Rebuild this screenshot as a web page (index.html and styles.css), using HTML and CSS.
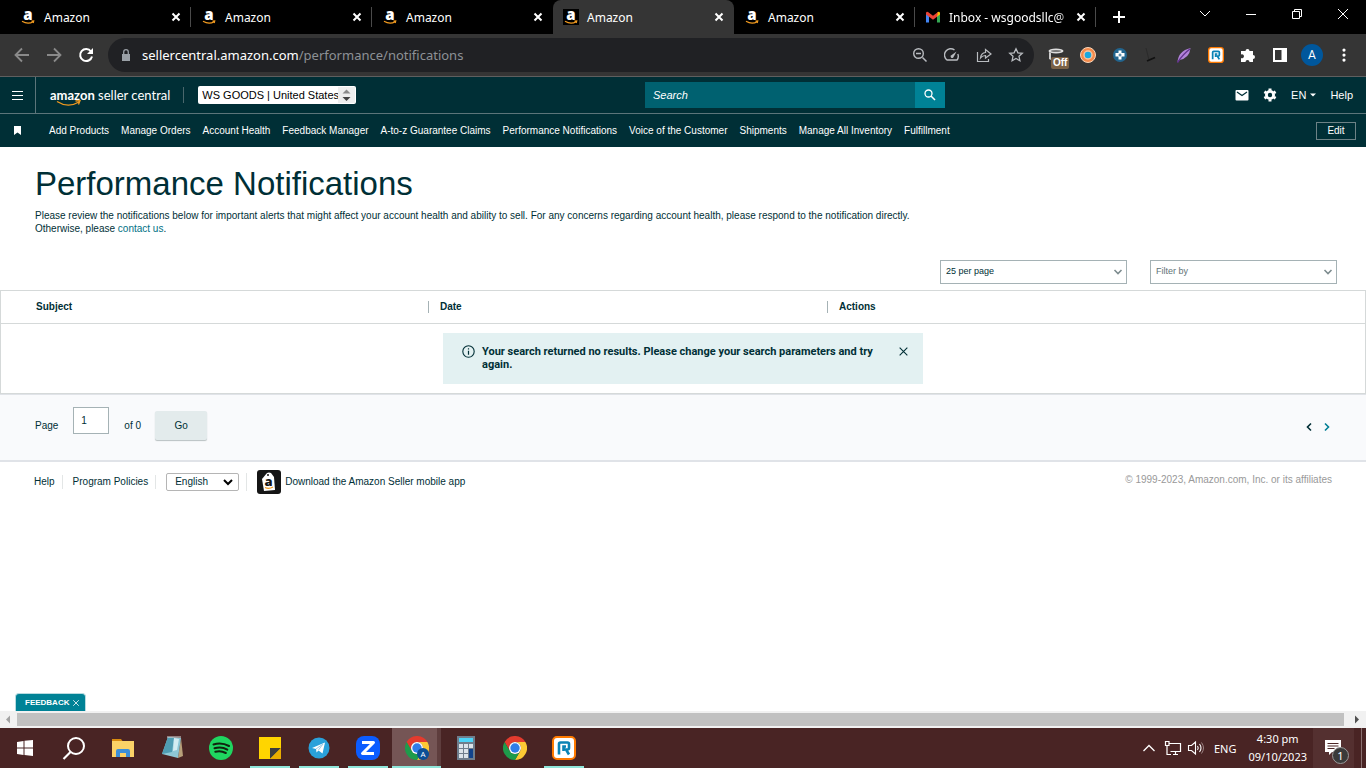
FILE: index.html
```
<!DOCTYPE html>
<html lang="en">
<head>
    <meta charset="UTF-8">
    <meta name="viewport" content="width=device-width, initial-scale=1.0">
    <title>Performance Notifications</title>
    <link rel="stylesheet" href="styles.css">
</head>
<body>
    <!-- shared icons -->
    <svg class="sprite" aria-hidden="true">
        <symbol id="amazon" viewBox="0 0 16 16">
            <rect width="16" height="16" fill="#000"/>
            <text x="8" y="11" text-anchor="middle" font-family="Open Sans, sans-serif" font-weight="800" font-size="15" fill="#fff">a</text>
            <path d="M2 12.3q6 3.6 11.2.4M11.5 12.2l2.2-.2-.5 2" fill="none" stroke="#f19a1f" stroke-width="1.2"/>
        </symbol>
        <symbol id="close" viewBox="0 0 10 10">
            <path d="M1.5 1.5l7 7M8.5 1.5l-7 7" fill="none" stroke="currentColor"/>
        </symbol>
        <symbol id="chevron" viewBox="0 0 10 10">
            <path d="M1.5 3l3.5 3.5L8.500 3" fill="none" stroke="currentColor" stroke-width="1.6"/>
        </symbol>
        <symbol id="chrome" viewBox="0 0 24 24">
            <path d="M1.6 6A12 12 0 0 1 22.4 6H12A6 6 0 0 0 6.8 15Z" fill="#e33b2e"/>
            <path d="M1.6 6A12 12 0 0 1 22.4 6H12A6 6 0 0 0 6.8 15Z" fill="#fcc934" transform="rotate(120 12 12)"/>
            <path d="M1.6 6A12 12 0 0 1 22.4 6H12A6 6 0 0 0 6.8 15Z" fill="#1e9b4b" transform="rotate(240 12 12)"/>
            <circle cx="12" cy="12" r="6" fill="#fff"/>
            <circle cx="12" cy="12" r="4.7" fill="#2f7de9"/>
        </symbol>
        <symbol id="ring" viewBox="0 0 24 24">
            <rect x="1" y="1" width="22" height="22" rx="4" fill="#fff" stroke="#ff7a00" stroke-width="2"/>
            <path d="M7 18.500V8q0-1.500 1.500-1.500h7Q17 6.500 17 8v4q0 1.500-1.500 1.500H14l3 5M11.500 15v-4.500h2.500" fill="none" stroke="#0a83b5" stroke-width="2.600"/>
        </symbol>
    </svg>

    <div class="tabs">
        <div class="tab">
            <svg class="favicon"><use href="#amazon"/></svg><span>Amazon</span>
            <button class="tab-close" aria-label="Close tab"><svg><use href="#close"/></svg></button>
        </div>
        <div class="tab">
            <svg class="favicon"><use href="#amazon"/></svg><span>Amazon</span>
            <button class="tab-close" aria-label="Close tab"><svg><use href="#close"/></svg></button>
        </div>
        <div class="tab no-line">
            <svg class="favicon"><use href="#amazon"/></svg><span>Amazon</span>
            <button class="tab-close" aria-label="Close tab"><svg><use href="#close"/></svg></button>
        </div>
        <div class="tab active">
            <svg class="favicon"><use href="#amazon"/></svg><span>Amazon</span>
            <button class="tab-close" aria-label="Close tab"><svg><use href="#close"/></svg></button>
        </div>
        <div class="tab">
            <svg class="favicon"><use href="#amazon"/></svg><span>Amazon</span>
            <button class="tab-close" aria-label="Close tab"><svg><use href="#close"/></svg></button>
        </div>
        <div class="tab">
            <svg class="favicon" viewBox="0 0 16 16">
                <path d="M1 4v9.5h3V7z" fill="#4285f4"/>
                <path d="M12 7v6.5h3V4z" fill="#34a853"/>
                <path d="M12 3.8v4L15 5.500V4q-.5-2-2-1z" fill="#fbbc04"/>
                <path d="M1 5.500V4q.5-2 2-1l5 3.700L13 3l-1 4.800-4 3-4-3z" fill="#ea4335"/>
            </svg><span class="fade">Inbox - wsgoodsllc@</span>
            <button class="tab-close" aria-label="Close tab"><svg><use href="#close"/></svg></button>
        </div>
        <button class="new-tab" aria-label="New tab"><svg viewBox="0 0 14 14"><path d="M7 1v12M1 7h12" stroke="#fff" stroke-width="2"/></svg></button>
        <div class="window-buttons">
            <button aria-label="Search tabs"><svg viewBox="0 0 12 12"><path d="M1 3l5 5 5-5" fill="none" stroke="#fff"/></svg></button>
            <button aria-label="Minimize"><svg viewBox="0 0 12 12"><path d="M1 6.500h10" stroke="#fff"/></svg></button>
            <button aria-label="Restore"><svg viewBox="0 0 12 12"><path d="M1.500 3.500h7v7h-7zM3.500 3.500v-2h7v7h-2" fill="none" stroke="#fff"/></svg></button>
            <button aria-label="Close"><svg viewBox="0 0 12 12"><path d="M1 1l10 10M11 1L1 11" stroke="#fff"/></svg></button>
        </div>
    </div>

    <div class="toolbar">
        <button class="tool dim" aria-label="Back"><svg viewBox="0 0 16 16"><path d="M15 8H2M8 1.500L1.500 8 8 14.500" fill="none" stroke="currentColor" stroke-width="1.800"/></svg></button>
        <button class="tool dim" aria-label="Forward"><svg viewBox="0 0 16 16"><path d="M1 8h13M8 1.500L14.500 8 8 14.500" fill="none" stroke="currentColor" stroke-width="1.800"/></svg></button>
        <button class="tool" aria-label="Reload"><svg viewBox="0 0 16 16"><path d="M13 4.500A6 6 0 1 0 14 9.500" fill="none" stroke="#fff" stroke-width="2"/><path d="M15 1v6H9z" fill="#fff"/></svg></button>
        <div class="omnibox">
            <svg class="lock" viewBox="0 0 10 12"><path d="M1 5h8v7H1z" fill="#9aa0a6"/><path d="M2.700 5V3a2.300 2.300 0 0 1 4.600 0v2" fill="none" stroke="#9aa0a6" stroke-width="1.300"/></svg>
            <span class="url">sellercentral.amazon.com<span class="path">/performance/notifications</span></span>
            <button class="tool" aria-label="Zoom"><svg viewBox="0 0 16 16"><path d="M10.500 10.500l4 4M4 6.500h5" fill="none" stroke="currentColor" stroke-width="1.500"/><circle cx="6.500" cy="6.500" r="4.800" fill="none" stroke="currentColor" stroke-width="1.400"/></svg></button>
            <button class="tool" aria-label="Performance"><svg viewBox="0 0 16 16"><path d="M10.500 3A6 6 0 0 0 3 13h10a6 6 0 0 0 .8-6" fill="none" stroke="currentColor" stroke-width="1.400"/><path d="M12.500 4.500L9.300 10.500a1.500 1.500 0 0 1-2.300-2z" fill="currentColor"/></svg></button>
            <button class="tool" aria-label="Share"><svg viewBox="0 0 16 16"><path d="M1.500 5v9.500h11V12M4.500 11q.5-5 5-5.500v-3L15 7l-5.500 4V8.500q-3 0-5 2.500z" fill="none" stroke="currentColor" stroke-width="1.200"/></svg></button>
            <button class="tool" aria-label="Bookmark"><svg viewBox="0 0 16 16"><path d="M8 1.800l1.900 4 4.400.5-3.300 3 .9 4.400L8 11.500l-3.900 2.200.9-4.400-3.300-3 4.400-.5z" fill="none" stroke="currentColor" stroke-width="1.300"/></svg></button>
        </div>
        <button class="tool ext-off" aria-label="Extension off"><svg viewBox="0 0 16 16"><ellipse cx="8" cy="4" rx="7.500" ry="2.500" fill="#ddd"/><ellipse cx="8" cy="4" rx="5" ry="1" fill="#777"/><path d="M1 5v7l2 1V6" fill="#ccc"/></svg><span>Off</span></button>
        <button class="tool" aria-label="Extension"><svg viewBox="0 0 16 16"><circle cx="8" cy="8" r="7.500" fill="#f58a4b" stroke="#f9d7bb"/><circle cx="8" cy="8" r="4" fill="#19a8e0" stroke="#f7c6a0" stroke-width="1.400"/></svg></button>
        <button class="tool" aria-label="Extension"><svg viewBox="0 0 16 16"><circle cx="8" cy="8" r="7" fill="#22658f"/><path d="M6.500 3.500h3v2.500h3v3.500h-3v3h-3v-3h-3V6h3z" fill="#fff"/><path d="M8 6.500v3M6.500 8h3" stroke="#22658f"/></svg></button>
        <button class="tool" aria-label="Extension"><svg viewBox="0 0 16 16"><path d="M2 1l3 12" stroke="#2a2a2a"/><path d="M3 14l8-3.500" stroke="#111" stroke-width="1.800"/></svg></button>
        <button class="tool" aria-label="Extension"><svg viewBox="0 0 16 16"><path d="M1.500 15.500Q2 4 14.500 1q-1 10-11 12z" fill="#b183d8"/><path d="M1.500 15.500Q7 7 14 2" fill="none" stroke="#63318e" stroke-width="1.400"/></svg></button>
        <button class="tool" aria-label="Extension"><svg><use href="#ring"/></svg></button>
        <button class="tool" aria-label="Extensions"><svg viewBox="0 0 16 16"><path d="M1 4h4.500a2 2 0 1 1 4 0H13v4a2 2 0 1 1 0 4v3H9.500a2 2 0 1 0-4 0H1v-4a2 2 0 1 0 0-3.500z" fill="#fff"/></svg></button>
        <button class="tool" aria-label="Side panel"><svg viewBox="0 0 16 16"><path d="M1 1h14v14H1zM3 3v10h6.500V3z" fill="#fff" fill-rule="evenodd"/></svg></button>
        <button class="tool" aria-label="Profile"><span class="avatar">A</span></button>
        <button class="tool" aria-label="Menu"><svg viewBox="0 0 16 16"><path d="M8 3v.1M8 8v.1M8 13v.1" stroke="#fff" stroke-width="3.200" stroke-linecap="round"/></svg></button>
    </div>

    <header class="site-header">
        <div class="header-left">
            <button class="menu" aria-label="Menu"><svg viewBox="0 0 11 9"><path d="M0 .5h11M0 4.500h11M0 8.500h11" stroke="#fff" stroke-width="1"/></svg></button>
            <a class="logo" href="#"><b>amazon</b> seller central
                <svg class="smile" viewBox="0 0 26 7"><path d="M1 1.500q11 7 22 .5M19.500 1l4.500-.3-1.500 3.800" fill="none" stroke="#f19a1f" stroke-width="1.300"/></svg>
            </a>
            <div class="account">
                <select aria-label="Account"><option>WS GOODS | United States</option></select>
                <svg viewBox="0 0 17 16"><path d="M4.500 6.500l4-4 4 4z" fill="#8a8a8a"/><path d="M4.500 10l4 4 4-4z" fill="#444"/></svg>
            </div>
        </div>
        <form class="search">
            <input type="text" placeholder="Search" aria-label="Search">
            <button type="button" aria-label="Search"><svg viewBox="0 0 12 12"><circle cx="4.500" cy="4.500" r="3.500" fill="none" stroke="#fff" stroke-width="1.300"/><path d="M7 7l4 4" stroke="#fff" stroke-width="1.600"/></svg></button>
        </form>
        <div class="header-right">
            <a href="#" aria-label="Messages"><svg viewBox="0 0 14 14"><rect x=".5" y="2" width="13" height="10.500" rx="1" fill="#fff"/><path d="M2 4l5 3.500L12 4" fill="none" stroke="#002f36" stroke-width="1.200"/></svg></a>
            <a href="#" aria-label="Settings"><svg viewBox="0 0 14 14"><circle cx="7" cy="7" r="3.600" fill="none" stroke="#fff" stroke-width="2.800"/><path d="M7 .5v2M7 11.500v2M1.400 3.700l1.700 1M10.900 9.300l1.700 1M1.400 10.300l1.700-1M10.900 4.700l1.700-1" stroke="#fff" stroke-width="3"/></svg></a>
            <a class="lang" href="#">EN <svg viewBox="0 0 6 4"><path d="M0 .5h6L3 3.500z" fill="#fff"/></svg></a>
            <a href="#">Help</a>
        </div>
    </header>

    <nav class="favorites">
        <svg class="bookmark" viewBox="0 0 7 9"><path d="M0 0h7v9L3.500 6.500 0 9z" fill="#fff"/></svg>
        <a href="#">Add Products</a>
        <a href="#">Manage Orders</a>
        <a href="#">Account Health</a>
        <a href="#">Feedback Manager</a>
        <a href="#">A-to-z Guarantee Claims</a>
        <a href="#">Performance Notifications</a>
        <a href="#">Voice of the Customer</a>
        <a href="#">Shipments</a>
        <a href="#">Manage All Inventory</a>
        <a href="#">Fulfillment</a>
        <button class="edit">Edit</button>
    </nav>

    <main>
        <div class="intro">
            <h1>Performance Notifications</h1>
            <p>Please review the notifications below for important alerts that might affect your account health and ability to sell. For any concerns regarding account health, please respond to the notification directly. Otherwise, please <a href="#">contact us</a>.</p>
        </div>

        <div class="filters">
            <div class="dropdown">
                <select aria-label="Results per page"><option>25 per page</option></select>
                <svg><use href="#chevron"/></svg>
            </div>
            <div class="dropdown muted">
                <select aria-label="Filter by"><option>Filter by</option></select>
                <svg><use href="#chevron"/></svg>
            </div>
        </div>

        <table class="notifications">
            <thead>
                <tr>
                    <th class="col-subject"><span>Subject</span></th>
                    <th class="col-date"><span>Date</span></th>
                    <th><span>Actions</span></th>
                </tr>
            </thead>
            <tbody>
                <tr>
                    <td colspan="3">
                        <div class="alert">
                            <svg class="info" viewBox="0 0 13 13"><circle cx="6.500" cy="6.500" r="5.700" fill="none" stroke="#002f36" stroke-width="1.100"/><path d="M6.500 5.700v4M6.500 3.200v1.300" stroke="#002f36" stroke-width="1.200"/></svg>
                            <p>Your search returned no results. Please change your search parameters and try again.</p>
                            <button aria-label="Dismiss"><svg><use href="#close"/></svg></button>
                        </div>
                    </td>
                </tr>
            </tbody>
        </table>

        <form class="pagination">
            <label for="page">Page</label>
            <input id="page" type="text" value="1">
            <span>of 0</span>
            <button type="button" class="go">Go</button>
            <div class="arrows">
                <button type="button" class="prev" aria-label="Previous page"><svg><use href="#chevron"/></svg></button>
                <button type="button" class="next" aria-label="Next page"><svg><use href="#chevron"/></svg></button>
            </div>
        </form>

        <footer>
            <a href="#">Help</a>
            <a href="#">Program Policies</a>
            <div class="language">
                <select aria-label="Language"><option>English</option></select>
                <svg viewBox="0 0 10 10"><path d="M1 3l4 4 4-4" fill="none" stroke="#000" stroke-width="2"/></svg>
            </div>
            <a class="app" href="#">
                <svg viewBox="0 0 24 24"><rect width="24" height="24" rx="3" fill="#151515"/><path d="M5 9l5-6q2-1 4 0l3 4 1 13-11 1z" fill="#fff"/><circle cx="11" cy="5" r="1" fill="#151515"/><text x="11.500" y="16" text-anchor="middle" font-family="Open Sans, sans-serif" font-weight="800" font-size="13" fill="#151515">a</text><path d="M8 17.500q4 2 8-.5" fill="none" stroke="#f19a1f" stroke-width="1.200"/></svg>
                Download the Amazon Seller mobile app
            </a>
            <small>© 1999-2023, Amazon.com, Inc. or its affiliates</small>
        </footer>

        <button class="feedback">FEEDBACK <svg><use href="#close"/></svg></button>
    </main>

    <div class="scrollbar">
        <svg viewBox="0 0 17 17"><path d="M10 4.500v8L6 8.500z" fill="#a3a3a3"/></svg>
        <div class="thumb"></div>
        <svg viewBox="0 0 17 17"><path d="M6 4.500v8l4-4z" fill="#505050"/></svg>
    </div>

    <div class="taskbar">
        <button class="task" aria-label="Start"><svg viewBox="0 0 24 24"><path d="M4 6l6.500-1v6.500H4zM11.500 4.800L20 4v7.500h-8.500zM4 12.500h6.500V19L4 18zM11.500 12.500H20V20l-8.500-1z" fill="#fff"/></svg></button>
        <button class="task" aria-label="Search"><svg viewBox="0 0 24 24"><circle cx="14" cy="10" r="8" fill="none" stroke="#fff" stroke-width="2"/><path d="M8.500 16L1.500 23" stroke="#fff" stroke-width="2.200"/></svg></button>
        <button class="task" aria-label="File Explorer"><svg viewBox="0 0 24 24"><path d="M1 3h9l1.500 2H1z" fill="#d98c0f"/><path d="M1 5h22v16H1z" fill="#fbd267"/><path d="M5 21v-6q0-2 2-2h10q2 0 2 2v6h-4v-4H9v4z" fill="#3b8fd9"/></svg></button>
        <button class="task" aria-label="Notepad"><svg viewBox="0 0 24 24"><path d="M21 2l2 18-5 2z" fill="#b8a07a"/><path d="M8 1l13 1-3 20-16-4z" fill="#8ec8d6"/><path d="M8 1l6 1-2 14-10 2z" fill="#4f9db3"/><path d="M14 2l5 1-2 11-4 1z" fill="#d3edf2"/><path d="M7 1h14" stroke="#ddd"/></svg></button>
        <button class="task" aria-label="Spotify"><svg viewBox="0 0 24 24"><circle cx="12" cy="12" r="12" fill="#1fd660"/><path d="M4.500 8.500q8-2.500 15.500 1.500M5.500 12.300q7-2 12.800 1.300M6.300 15.800q5.500-1.500 10.500 1.200" fill="none" stroke="#10240f" stroke-width="2" stroke-linecap="round"/></svg></button>
        <button class="task open" aria-label="Sticky Notes"><svg viewBox="0 0 24 24"><path d="M1 1h22v22H1z" fill="#ffd500"/><path d="M12 12h11L12 23z" fill="#3d3d3d"/><path d="M23 12v11H12z" fill="#e9ad00"/></svg></button>
        <button class="task open" aria-label="Telegram"><svg viewBox="0 0 24 24"><circle cx="12" cy="12" r="10.500" fill="#2aa1da"/><path d="M5 12l13-5.500-2.500 11-4-3-2 2-.5-3.500z" fill="#fff"/><path d="M9 13l7-5-4.500 6" fill="none" stroke="#9ccbe4"/></svg></button>
        <button class="task open" aria-label="Zoom"><svg viewBox="0 0 24 24"><rect width="24" height="24" rx="8" fill="#0b5cff"/><path d="M6 6.500h11.500L6.500 17.500H18" fill="none" stroke="#fff" stroke-width="3" stroke-linejoin="round"/></svg></button>
        <button class="task open current" aria-label="Chrome"><svg viewBox="0 0 24 24"><use href="#chrome"/><circle cx="18" cy="18" r="6" fill="#0c4f96"/><text x="18" y="21" text-anchor="middle" font-family="Open Sans, sans-serif" font-size="8" fill="#fff">A</text></svg></button>
        <button class="task" aria-label="Calculator"><svg viewBox="0 0 24 24"><path d="M3 0h18v24H3z" fill="#6f7d8c"/><path d="M5 2h14v4H5z" fill="#4cd3f7"/><path d="M5 8h4v4H5zM10 8h4v4h-4zM15 8h4v4h-4zM5 13h4v4H5zM10 13h4v4h-4zM5 18h4v4H5zM10 18h4v4h-4z" fill="#dbe3ea"/><path d="M15 13h4v9h-4z" fill="#12438c"/></svg></button>
        <button class="task" aria-label="Chrome"><svg><use href="#chrome"/></svg></button>
        <button class="task open" aria-label="RingCentral"><svg><use href="#ring"/></svg></button>
        <div class="tray">
            <svg class="tray-up" viewBox="0 0 14 14"><path d="M1.500 10L7 4.500l5.500 5.500" fill="none" stroke="#fff" stroke-width="1.300"/></svg>
            <svg viewBox="0 0 18 16"><path d="M5.500 3.500h11v8h-10M9 14.500h5M11.500 12v2M3 5v9.500h4M1.500 1.500h3.500v4H1.500z" fill="none" stroke="#fff" stroke-width="1.200"/></svg>
            <svg viewBox="0 0 18 16"><path d="M1.500 5.500h3l4-3.500v12l-4-3.500h-3zM10.500 6q1.500 2 0 4M12.500 4q3 4 0 8" fill="none" stroke="#fff" stroke-width="1.100"/><path d="M14.500 2.500q4 5.500 0 11" fill="none" stroke="#9d8585"/></svg>
            <span class="ime">ENG</span>
            <div class="clock">4:30 pm<br>09/10/2023</div>
            <button class="action-center" aria-label="Notifications"><svg viewBox="0 0 24 24"><path d="M1 4h16v12H8l-3 3v-3H1z" fill="#fff"/><path d="M3.500 7.500h11M3.500 10h11M3.500 12.500h7" stroke="#4d2929" stroke-width="1"/></svg><span class="count">1</span></button>
        </div>
    </div>
</body>
</html>
```
FILE: styles.css
```
* {
    box-sizing: border-box;
}
body {
    margin: 0;
    min-height: 100vh;
    display: flex;
    flex-direction: column;
    font-family: "Liberation Sans", Arial, sans-serif;
    font-size: 10px;
    color: #002f36;
    background-color: #fff;
}
button {
    padding: 0;
    border: none;
    background: none;
    color: inherit;
    font: inherit;
}
svg {
    display: block;
    flex: none;
}
a {
    color: inherit;
    text-decoration: none;
}
p {
    margin: 0;
}
select, input {
    margin: 0;
    font: inherit;
    color: inherit;
    border-radius: 0;
    appearance: none;
}
.sprite {
    display: none;
}

/* Browser tabs */
.tabs {
    display: flex;
    height: 34px;
    padding-left: 10px;
    background-color: #000;
    color: #fff;
    font-family: "Noto Sans", sans-serif;
    font-size: 12px;
}
.tab {
    display: flex;
    align-items: center;
    flex: 0 1 181px;
    padding: 0 10px;
    min-width: 0;
    background: linear-gradient(#4a4a4a, #4a4a4a) right center / 1px 20px no-repeat;
}
.tab.no-line {
    background: none;
}
.tab.active {
    background: #353535;
    border-radius: 8px 8px 0 0;
}
.tab span {
    flex: 1;
    margin-left: 8px;
    white-space: nowrap;
}
.tab .fade {
    -webkit-mask-image: linear-gradient(to right, #000 85%, transparent);
    mask-image: linear-gradient(to right, #000 85%, transparent);
}
.favicon {
    width: 16px;
    height: 16px;
}
.tab-close svg {
    width: 10px;
    height: 10px;
    stroke-width: 2;
}
.new-tab {
    width: 46px;
}
.new-tab svg {
    width: 14px;
    height: 14px;
    margin: auto;
}
.window-buttons {
    display: flex;
    margin-left: auto;
}
.window-buttons button {
    width: 46px;
    height: 28px;
}
.window-buttons svg {
    width: 12px;
    height: 12px;
    margin: auto;
}

/* Browser toolbar */
.toolbar {
    display: flex;
    align-items: center;
    height: 43px;
    padding: 0 6px;
    background-color: #353535;
    border-bottom: 1px solid #5f5f5f;
    color: #c4c7c9;
}
.tool {
    display: flex;
    align-items: center;
    justify-content: center;
    flex: none;
    width: 32px;
    height: 32px;
}
.tool svg {
    width: 16px;
    height: 16px;
}
.dim {
    color: #8a8a8a;
}
.omnibox {
    display: flex;
    align-items: center;
    flex: 1;
    height: 34px;
    margin: 0 6px;
    padding: 0 2px 0 13px;
    border-radius: 17px;
    background-color: #202124;
    color: #b9bcc0;
}
.lock {
    width: 10px;
    height: 12px;
}
.url {
    flex: 1;
    margin-left: 11px;
    color: #fff;
    font-family: "Noto Sans", sans-serif;
    font-size: 13px;
    white-space: nowrap;
}
.path {
    color: #8d9196;
}
.ext-off {
    position: relative;
}
.ext-off span {
    position: absolute;
    left: 11px;
    top: 18px;
    padding: 0 2px;
    border-radius: 2px;
    background-color: #7b6247;
    color: #fff;
    font-weight: bold;
    font-size: 10px;
    line-height: 12px;
}
.avatar {
    width: 22px;
    border-radius: 50%;
    background-color: #00579c;
    color: #fff;
    font-family: Roboto, sans-serif;
    font-size: 12px;
    line-height: 22px;
}

/* Seller Central header */
.site-header {
    display: grid;
    grid-template-columns: minmax(0, 645fr) 300px minmax(0, 421fr);
    align-items: center;
    height: 37px;
    background-color: #002f36;
    border-bottom: 1px solid #5c757a;
    color: #fff;
}
.header-left {
    display: flex;
    align-items: center;
    height: 100%;
}
.menu {
    width: 36px;
    height: 100%;
    border-right: 1px solid #5c757a;
}
.menu svg {
    width: 11px;
    height: 9px;
    margin: auto;
}
.logo {
    position: relative;
    margin-left: 14px;
    padding-right: 13px;
    border-right: 1px solid #4a676c;
    font-family: Lato, sans-serif;
    font-size: 13px;
    line-height: 16px;
    white-space: nowrap;
}
.smile {
    position: absolute;
    left: 6px;
    top: 13px;
    width: 26px;
    height: 7px;
}
.account {
    position: relative;
    margin-left: 14px;
    color: #000;
    font-size: 11px;
}
.account select {
    width: 158px;
    height: 18px;
    padding: 0 4px;
    border: none;
    border-radius: 2px;
    background-color: #fff;
}
.account svg {
    position: absolute;
    right: 1px;
    top: 1px;
    width: 17px;
    height: 16px;
    background-color: #eee;
}
.search {
    display: flex;
    height: 26px;
}
.search input {
    flex: 1;
    min-width: 0;
    padding: 0 8px;
    border: none;
    background-color: #006170;
    color: #fff;
    font-size: 11px;
}
.search input::placeholder {
    color: #fff;
    font-style: italic;
    opacity: 1;
}
.search button {
    width: 30px;
    background-color: #008296;
}
.search button svg {
    width: 12px;
    height: 12px;
    margin: auto;
}
.header-right {
    display: flex;
    align-items: center;
    justify-content: flex-end;
    gap: 14px;
    padding-right: 13px;
    font-size: 11px;
}
.header-right svg {
    width: 14px;
    height: 14px;
}
.header-right .lang {
    display: flex;
    align-items: center;
    gap: 4px;
}
.header-right .lang svg {
    width: 6px;
    height: 4px;
}
.favorites {
    display: flex;
    align-items: center;
    gap: 12px;
    height: 33px;
    padding: 0 10px 0 14px;
    background-color: #002f36;
    color: #fff;
    line-height: 13px;
    white-space: nowrap;
}
.bookmark {
    width: 7px;
    height: 9px;
    margin-right: 16px;
}
.edit {
    width: 40px;
    height: 18px;
    margin-left: auto;
    border: 1px solid #6d8286;
}

/* Page */
main {
    position: relative;
    flex: 1;
}
.intro {
    padding: 17px 35px 0;
}
h1 {
    margin: 0 0 5px;
    font-size: 33px;
    font-weight: normal;
    line-height: 40px;
}
.intro p {
    max-width: 880px;
    line-height: 13px;
}
.intro a {
    color: #007185;
}
.filters {
    display: flex;
    justify-content: flex-end;
    gap: 23px;
    padding: 25px 29px 6px;
}
.dropdown {
    position: relative;
}
.dropdown select {
    width: 187px;
    height: 24px;
    padding: 0 5px 2px;
    border: 1px solid #a5b2b5;
    background-color: #fff;
    font-size: 9px;
}
.dropdown svg {
    position: absolute;
    right: 4px;
    top: 7px;
    width: 10px;
    height: 10px;
    color: #7d8c8f;
}
.muted {
    color: #5f7377;
}
.notifications {
    width: 100%;
    border: 1px solid #d5d9d9;
    border-collapse: separate;
    border-spacing: 0;
    table-layout: fixed;
}
.notifications th {
    height: 33px;
    padding: 0;
    border-bottom: 1px solid #d5d9d9;
    text-align: left;
}
.notifications th span {
    display: block;
    padding-left: 11px;
    border-left: 1px solid #a5b2b5;
    line-height: 12px;
}
.notifications th.col-subject span {
    padding-left: 35px;
    border: none;
}
.col-subject {
    width: 427px;
}
.col-date {
    width: 399px;
}
.notifications td {
    padding: 9px 0;
}
.alert {
    display: flex;
    align-items: flex-start;
    width: 480px;
    height: 51px;
    margin: 0 auto;
    padding: 12px 14px 12px 19px;
    background-color: #e3f1f2;
    font-family: Roboto, sans-serif;
    font-size: 11px;
    font-weight: bold;
    line-height: 13px;
}
.alert p {
    flex: 1;
    margin-left: 7px;
}
.info {
    width: 13px;
    height: 13px;
}
.alert button svg {
    width: 11px;
    height: 11px;
    margin-top: 1px;
}
.pagination {
    display: flex;
    align-items: center;
    height: 68px;
    padding: 0 34px 4px 35px;
    border-top: 1px solid #e0e3e8;
    border-bottom: 2px solid #e0e3e8;
    background-color: #f9fafc;
}
.pagination input {
    width: 36px;
    height: 27px;
    margin: 0 15px 10px;
    padding: 0 7px;
    border: 1px solid #a5b2b5;
    background-color: #fff;
}
.go {
    width: 52px;
    height: 29px;
    margin-left: 14px;
    border-radius: 2px;
    background-color: #e3ebec;
    box-shadow: 0 1px 1px #b9c0c2;
}
.arrows {
    display: flex;
    gap: 8px;
    margin-left: auto;
    padding-top: 2px;
}
.arrows svg {
    width: 10px;
    height: 10px;
}
.prev svg {
    transform: rotate(90deg);
}
.next svg {
    transform: rotate(-90deg);
    color: #007e94;
}
footer {
    display: flex;
    align-items: center;
    padding: 8px 34px;
}
footer > a, .language {
    margin-right: 10px;
    padding-right: 7px;
    border-right: 1px solid #e3e6e6;
    line-height: 14px;
}
.language {
    position: relative;
}
.language select {
    display: block;
    width: 73px;
    height: 18px;
    padding: 0 8px;
    border: 1px solid #b5b5b5;
    border-radius: 2px;
    background-color: #fff;
}
.language svg {
    position: absolute;
    right: 13px;
    top: 4px;
    width: 10px;
    height: 10px;
}
footer .app {
    display: flex;
    align-items: center;
    gap: 4px;
    border: none;
}
.app svg {
    width: 24px;
    height: 24px;
}
footer small {
    margin-left: auto;
    padding-bottom: 5px;
    color: #999;
    font-size: 10px;
}
.feedback {
    position: absolute;
    left: 15px;
    bottom: 0;
    display: flex;
    align-items: center;
    gap: 3px;
    width: 71px;
    height: 18px;
    padding: 0 6px 0 9px;
    border: 1px solid #b8dbe0;
    border-bottom: none;
    border-radius: 4px 4px 0 0;
    background-color: #008296;
    color: #fff;
    font-size: 8px;
    font-weight: bold;
}
.feedback svg {
    width: 8px;
    height: 8px;
}
.scrollbar {
    display: flex;
    height: 17px;
    background-color: #f1f1f1;
}
.scrollbar svg {
    width: 17px;
    height: 17px;
}
.thumb {
    flex: 1;
    margin: 2px 5px 2px 0;
    background-color: #c1c1c1;
}

/* Taskbar */
.taskbar {
    display: flex;
    height: 40px;
    background-color: #492424;
    color: #fff;
    font-family: "Noto Sans", sans-serif;
    font-size: 12px;
}
.task {
    position: relative;
    width: 49px;
}
.task svg {
    width: 24px;
    height: 24px;
    margin: auto;
}
.open::after {
    content: "";
    position: absolute;
    left: 5px;
    right: 4px;
    bottom: 0;
    height: 2px;
    background-color: #8fe6da;
}
.current {
    background: linear-gradient(#755555, #755555) left / 45px 100% no-repeat, #5e3d3d;
}
.current::after {
    left: 0;
    right: 0;
}
.tray {
    display: flex;
    align-items: center;
    margin: 0 4px 0 auto;
    padding-right: 7px;
    border-right: 1px solid #8a7070;
}
.tray > svg {
    width: 18px;
    height: 16px;
    margin-right: 5px;
}
.tray > .tray-up {
    width: 14px;
    height: 14px;
    margin-right: 8px;
}
.ime {
    margin: 0 12px 0 4px;
    font-size: 11px;
}
.clock {
    font-size: 11px;
    line-height: 18px;
    text-align: center;
}
.action-center {
    position: relative;
    width: 41px;
    height: 40px;
    margin-left: 6px;
    background-color: #543030;
}
.action-center svg {
    width: 24px;
    height: 24px;
    margin: 0 auto 0 11px;
}
.count {
    position: absolute;
    left: 19px;
    top: 19px;
    width: 17px;
    border: 1px solid #999;
    border-radius: 50%;
    background-color: #3a3a3a;
    font-size: 11px;
    line-height: 15px;
}
```
